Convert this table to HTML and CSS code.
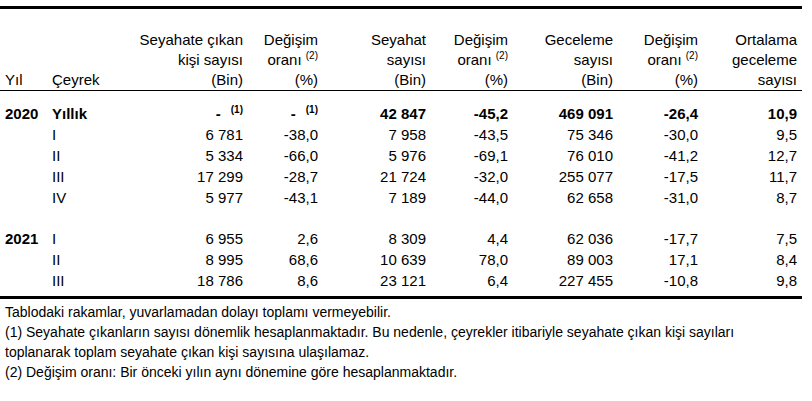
FILE: index.html
```html
<!DOCTYPE html>
<html lang="tr">
<head>
<meta charset="utf-8">
<title>Seyahat istatistikleri</title>
<link rel="stylesheet" href="styles.css">
</head>
<body>
<table class="stats">
  <colgroup>
    <col class="c-year">
    <col class="c-q">
    <col class="c-1">
    <col class="c-2">
    <col class="c-3">
    <col class="c-4">
    <col class="c-5">
    <col class="c-6">
    <col class="c-7">
  </colgroup>
  <thead>
    <tr>
      <th class="left first">Yıl</th>
      <th class="left">Çeyrek</th>
      <th>Seyahate çıkan<br>kişi sayısı<br>(Bin)</th>
      <th>Değişim<br>oranı <sup class="hnote">(2)</sup><br>(%)</th>
      <th>Seyahat<br>sayısı<br>(Bin)</th>
      <th>Değişim<br>oranı <sup class="hnote">(2)</sup><br>(%)</th>
      <th>Geceleme<br>sayısı<br>(Bin)</th>
      <th>Değişim<br>oranı <sup class="hnote">(2)</sup><br>(%)</th>
      <th class="last">Ortalama<br>geceleme<br>sayısı</th>
    </tr>
  </thead>
  <tbody>
    <tr class="total top">
      <td class="left first">2020</td>
      <td class="left">Yıllık</td>
      <td>-<sup class="dnote">(1)</sup></td>
      <td>-<sup class="dnote">(1)</sup></td>
      <td>42 847</td>
      <td>-45,2</td>
      <td>469 091</td>
      <td>-26,4</td>
      <td class="last">10,9</td>
    </tr>
    <tr>
      <td class="left first"></td>
      <td class="left">I</td>
      <td>6 781</td>
      <td>-38,0</td>
      <td>7 958</td>
      <td>-43,5</td>
      <td>75 346</td>
      <td>-30,0</td>
      <td class="last">9,5</td>
    </tr>
    <tr>
      <td class="left first"></td>
      <td class="left">II</td>
      <td>5 334</td>
      <td>-66,0</td>
      <td>5 976</td>
      <td>-69,1</td>
      <td>76 010</td>
      <td>-41,2</td>
      <td class="last">12,7</td>
    </tr>
    <tr>
      <td class="left first"></td>
      <td class="left">III</td>
      <td>17 299</td>
      <td>-28,7</td>
      <td>21 724</td>
      <td>-32,0</td>
      <td>255 077</td>
      <td>-17,5</td>
      <td class="last">11,7</td>
    </tr>
    <tr>
      <td class="left first"></td>
      <td class="left">IV</td>
      <td>5 977</td>
      <td>-43,1</td>
      <td>7 189</td>
      <td>-44,0</td>
      <td>62 658</td>
      <td>-31,0</td>
      <td class="last">8,7</td>
    </tr>
    <tr class="spacer">
      <td colspan="9"></td>
    </tr>
    <tr>
      <td class="left first year">2021</td>
      <td class="left">I</td>
      <td>6 955</td>
      <td>2,6</td>
      <td>8 309</td>
      <td>4,4</td>
      <td>62 036</td>
      <td>-17,7</td>
      <td class="last">7,5</td>
    </tr>
    <tr>
      <td class="left first"></td>
      <td class="left">II</td>
      <td>8 995</td>
      <td>68,6</td>
      <td>10 639</td>
      <td>78,0</td>
      <td>89 003</td>
      <td>17,1</td>
      <td class="last">8,4</td>
    </tr>
    <tr class="bottom">
      <td class="left first"></td>
      <td class="left">III</td>
      <td>18 786</td>
      <td>8,6</td>
      <td>23 121</td>
      <td>6,4</td>
      <td>227 455</td>
      <td>-10,8</td>
      <td class="last">9,8</td>
    </tr>
  </tbody>
</table>
<div class="notes">
  <p>Tablodaki rakamlar, yuvarlamadan dolayı toplamı vermeyebilir.</p>
  <p>(1) Seyahate çıkanların sayısı dönemlik hesaplanmaktadır. Bu nedenle, çeyrekler itibariyle seyahate çıkan kişi sayıları toplanarak toplam seyahate çıkan kişi sayısına ulaşılamaz.</p>
  <p>(2) Değişim oranı: Bir önceki yılın aynı dönemine göre hesaplanmaktadır.</p>
</div>
</body>
</html>
```
FILE: styles.css
```css
html, body {
  margin: 0;
  padding: 0;
  background: #fff;
  color: #000;
}

.stats {
  width: 802px;
  margin-top: 6px;
  border-collapse: separate;
  border-spacing: 0;
  table-layout: fixed;
  font-family: "Liberation Sans", Arial, sans-serif;
  font-size: 15px;
}

.c-year { width: 52px; }
.c-q { width: 78px; }
.c-1 { width: 113px; }
.c-2 { width: 75px; }
.c-3 { width: 108px; }
.c-4 { width: 82px; }
.c-5 { width: 105px; }
.c-6 { width: 85px; }
.c-7 { width: 104px; }

.stats th {
  border-top: 3px solid #000;
  border-bottom: 1px solid #000;
  padding: 21px 0 0 0;
  font-weight: normal;
  line-height: 20px;
  text-align: right;
  vertical-align: bottom;
  white-space: nowrap;
}

.stats td {
  padding: 0;
  height: 21px;
  line-height: 21px;
  text-align: right;
  white-space: nowrap;
  vertical-align: middle;
}

.stats .left { text-align: left; }
.stats .first { padding-left: 5px; }
.stats .last { padding-right: 5px; }

.stats tr.top td { padding-top: 12px; }
.stats tr.total td { font-weight: bold; }
.stats td.year { font-weight: bold; }

.stats tr.spacer td { height: 20px; }

.stats tr.bottom td {
  padding-bottom: 5px;
  border-bottom: 3px solid #000;
}

.hnote {
  font-size: 10px;
  line-height: 0;
  vertical-align: 6px;
}

.dnote {
  font-size: 10px;
  font-weight: bold;
  line-height: 0;
  vertical-align: 6px;
  margin-left: 10px;
}

.notes {
  margin-top: 3px;
  padding-left: 5px;
  width: 797px;
  font-family: "Liberation Sans", Arial, sans-serif;
  font-size: 14px;
  line-height: 20px;
}

.notes p {
  margin: 0;
}
```
